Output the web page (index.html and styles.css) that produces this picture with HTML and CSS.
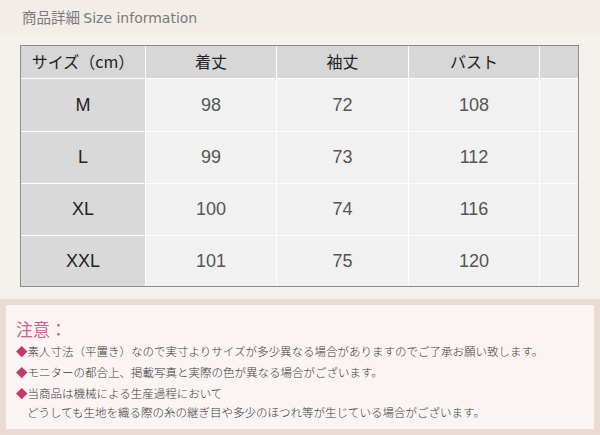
FILE: index.html
```html
<!DOCTYPE html>
<html lang="ja">
<head>
<meta charset="utf-8">
<link rel="stylesheet" href="styles.css">
</head>
<body>
<div class="page">
  <div class="title">商品詳細 <span class="title-en">Size information</span></div>
  <div class="table-wrap">
    <div class="size-grid">
      <div class="cell head">サイズ（cm）</div>
      <div class="cell head">着丈</div>
      <div class="cell head">袖丈</div>
      <div class="cell head">バスト</div>
      <div class="cell head"></div>

      <div class="cell label">M</div>
      <div class="cell val">98</div>
      <div class="cell val">72</div>
      <div class="cell val">108</div>
      <div class="cell val"></div>

      <div class="cell label">L</div>
      <div class="cell val">99</div>
      <div class="cell val">73</div>
      <div class="cell val">112</div>
      <div class="cell val"></div>

      <div class="cell label">XL</div>
      <div class="cell val">100</div>
      <div class="cell val">74</div>
      <div class="cell val">116</div>
      <div class="cell val"></div>

      <div class="cell label">XXL</div>
      <div class="cell val">101</div>
      <div class="cell val">75</div>
      <div class="cell val">120</div>
      <div class="cell val"></div>
    </div>
  </div>
  <div class="notes">
    <div class="notes-inner">
      <div class="notes-title">注意：</div>
      <div class="note n1"><span class="dia">◆</span>素人寸法（平置き）なので実寸よりサイズが多少異なる場合がありますのでご了承お願い致します。</div>
      <div class="note n2"><span class="dia">◆</span>モニターの都合上、掲載写真と実際の色が異なる場合がございます。</div>
      <div class="note n3"><span class="dia">◆</span>当商品は機械による生産過程において<br><span class="indent">どうしても生地を織る際の糸の継ぎ目や多少のほつれ等が生じている場合がございます。</span></div>
    </div>
  </div>
</div>
</body>
</html>
```

FILE: styles.css
```css
html, body {
  margin: 0;
  padding: 0;
}
body {
  background: #f5f1ec;
  width: 600px;
  height: 435px;
  overflow: hidden;
}
.page {
  display: flex;
  flex-direction: column;
}
.title {
  height: 33px;
  line-height: 33px;
  padding-left: 22px;
  font-family: "Noto Sans CJK JP", sans-serif;
  font-size: 14.5px;
  color: #7a7a7a;
  background: #f2ede7;
  box-sizing: border-box;
}
.title-en {
  font-family: "DejaVu Sans", sans-serif;
  font-size: 14px;
}
.table-wrap {
  padding: 12px 0 0 20px;
}
.size-grid {
  display: grid;
  grid-template-columns: 124px 130px 131px 130px 38px;
  grid-template-rows: 32px 52px 51px 51px 50px;
  gap: 1px;
  width: 557px;
  background: #fdfdfd;
  border: 1px solid #8e8e8e;
}
.cell {
  display: flex;
  align-items: center;
  justify-content: center;
  font-family: "Liberation Sans", "Noto Sans CJK JP", sans-serif;
}
.head {
  background: #d7d7d7;
  font-family: "Noto Sans CJK JP", sans-serif;
  font-size: 16px;
  color: #222;
  padding-bottom: 2px;
}
.label {
  background: #d9d9d9;
  font-size: 18px;
  color: #222;
}
.val {
  background: #f1f1f1;
  font-size: 18px;
  color: #555;
}
.notes {
  margin-top: 12px;
  background: #ebdbd4;
  padding: 6px 6px 6px 6px;
}
.notes-inner {
  background: #faf4f3;
  height: 124px;
  padding: 16px 0 0 10px;
  box-sizing: border-box;
  font-family: "Liberation Serif", "Noto Sans CJK JP", serif;
  color: #3a3a3a;
}
.notes-title {
  font-family: "Liberation Serif", "Noto Sans CJK JP", serif;
  font-size: 17px;
  line-height: 20px;
  color: #c8638a;
}
.note {
  font-size: 11.5px;
  font-weight: 300;
}
.n1 {
  line-height: 22px;
}
.n2 {
  line-height: 21px;
}
.n3 {
  line-height: 18.5px;
  margin-top: 1px;
}
.dia {
  color: #c23a6c;
}
.indent {
  padding-left: 11px;
}
```
